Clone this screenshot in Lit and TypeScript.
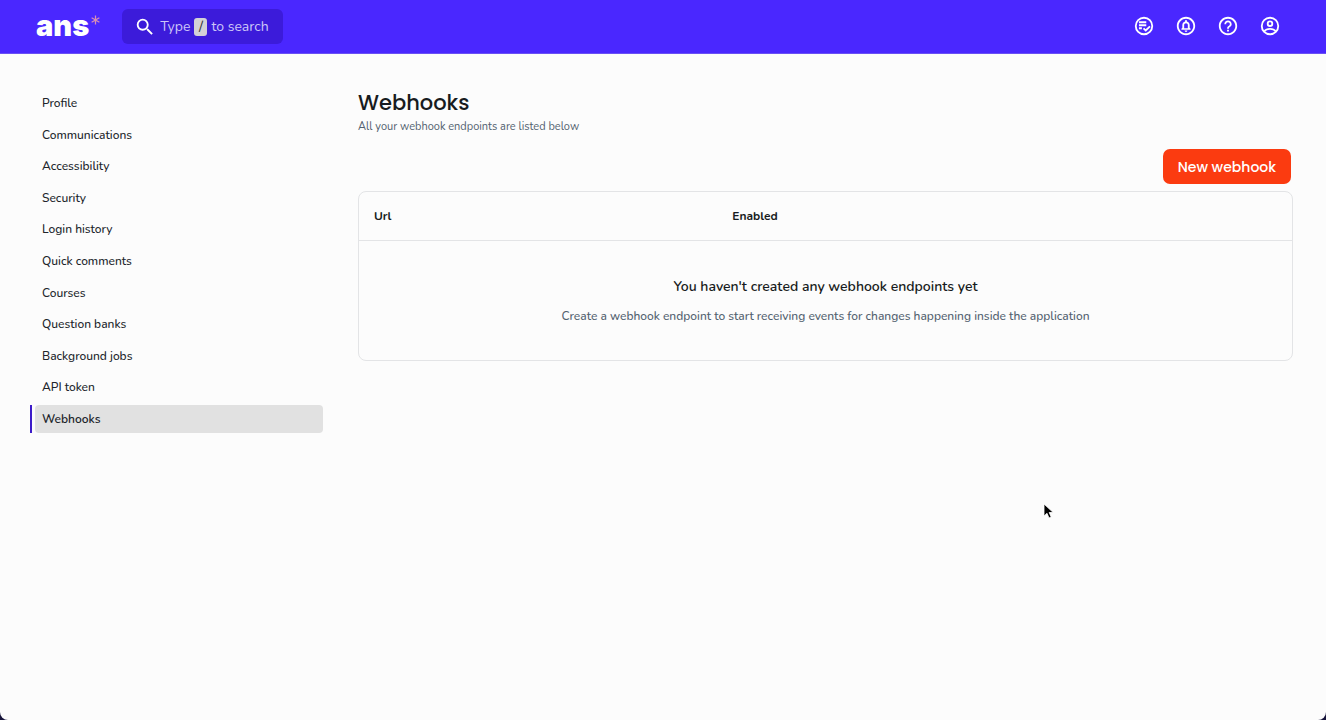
import { LitElement, html, css, svg } from "lit";
import { customElement, state } from "lit/decorators.js";

const icon = (content: unknown) => html`
  <svg class="icon" viewBox="0 0 24 24" fill="currentColor" aria-hidden="true">${content}</svg>
`;

const ring = svg`<circle cx="12" cy="12" r="9" fill="none" stroke="currentColor" stroke-width="2" />`;

const icons = {
  search: svg`<path d="M15.5 14h-.79l-.28-.27A6.47 6.47 0 0 0 16 9.5 6.5 6.5 0 1 0 9.5 16c1.61 0 3.09-.59 4.23-1.57l.27.28v.79l5 4.99L20.49 19l-4.99-5zm-6 0C7.01 14 5 11.99 5 9.5S7.01 5 9.5 5 14 7.01 14 9.5 11.99 14 9.5 14z" />`,
  grading: svg`${ring}<path d="M6.500 6.800h8v2.200h-8zM6.500 10h8v2.200h-8zM6.500 13.400h3.200v2.200H6.500z" />
    <path d="M11.500 14.500l2.400 2.400 4.600-4.600" fill="none" stroke="currentColor" stroke-width="2" />`,
  bell: svg`<path d="M12 2C6.48 2 2 6.48 2 12s4.48 10 10 10 10-4.48 10-10S17.52 2 12 2zm0 18c-4.41 0-8-3.59-8-8s3.59-8 8-8 8 3.59 8 8-3.59 8-8 8zm0-1.5c.83 0 1.5-.67 1.5-1.5h-3c0 .83.67 1.5 1.5 1.5zm4-4.5v-3c0-1.86-1.28-3.41-3-3.86V6.5c0-.55-.45-1-1-1s-1 .45-1 1v.64c-1.72.45-3 2-3 3.86v3l-1 1v1h10v-1l-1-1zm-2 .5h-4V11c0-1.1.9-2 2-2s2 .9 2 2v3.500z" />`,
  help: svg`<path d="M11 18h2v-2h-2v2zm1-16C6.48 2 2 6.480 2 12s4.480 10 10 10 10-4.480 10-10S17.520 2 12 2zm0 18c-4.410 0-8-3.590-8-8s3.590-8 8-8 8 3.590 8 8-3.590 8-8 8zm0-14c-2.210 0-4 1.790-4 4h2c0-1.100.900-2 2-2s2 .900 2 2c0 2-3 1.750-3 5h2c0-2.250 3-2.500 3-5 0-2.210-1.790-4-4-4z" />`,
  account: svg`${ring}<circle cx="12" cy="9.500" r="2.500" fill="none" stroke="currentColor" stroke-width="2" />
    <path d="M5.500 18c1.500-1.900 4-2.800 6.500-2.800s5 .9 6.500 2.800" fill="none" stroke="currentColor" stroke-width="2" />`,
};

@customElement("app-header")
class AppHeader extends LitElement {
  static styles = css`
    :host {
      display: flex;
      align-items: center;
      height: 53px;
      padding: 0 45px 0 36px;
      background: #4a27ff;
      border-bottom: 1px solid #6a50f4;
      font-family: Nunito, Lato, sans-serif;
    }
    .brand {
      display: flex;
      align-items: center;
      color: #fff;
      text-decoration: none;
    }
    .word {
      font: 900 29px/40px Inter, sans-serif;
      padding-bottom: 2px;
    }
    .star {
      width: 9px;
      height: 10px;
      margin: 0 0 14px 2px;
      stroke: #d98fb4;
      stroke-width: 1.4;
    }
    .search {
      display: flex;
      align-items: center;
      gap: 4px;
      height: 35px;
      margin-left: 22px;
      padding: 0 14px 0 12px;
      border: 0;
      border-radius: 6px;
      background: #3c1bda;
      color: #cdc6f8;
      font: 14px/20px Nunito, Lato, sans-serif;
      cursor: pointer;
    }
    .glass {
      display: flex;
      color: #fff;
    }
    .key {
      width: 13px;
      border-radius: 3px;
      background: #d3d1d6;
      color: #333;
      font: 14px/18px Nunito, Lato, sans-serif;
      text-align: center;
    }
    .icon {
      display: block;
      width: 22px;
      height: 22px;
    }
    .actions {
      display: flex;
      gap: 20px;
      margin-left: auto;
      padding-bottom: 2px;
    }
    .action {
      padding: 0;
      border: 0;
      background: none;
      color: #fff;
      cursor: pointer;
    }
  `;

  render() {
    return html`
      <a class="brand" href="#" aria-label="ans home">
        <span class="word">ans</span>
        <svg class="star" viewBox="0 0 10 10" aria-hidden="true">
          <path d="M5 0v10M.7 2.500l8.600 5M9.300 2.500l-8.600 5" />
        </svg>
      </a>
      <button class="search" type="button">
        <span class="glass">${icon(icons.search)}</span>
        <span>Type</span><kbd class="key">/</kbd><span>to search</span>
      </button>
      <div class="actions">
        <button class="action" type="button" aria-label="Grading">${icon(icons.grading)}</button>
        <button class="action" type="button" aria-label="Notifications">${icon(icons.bell)}</button>
        <button class="action" type="button" aria-label="Help">${icon(icons.help)}</button>
        <button class="action" type="button" aria-label="Account">${icon(icons.account)}</button>
      </div>
    `;
  }
}

@customElement("settings-nav")
class SettingsNav extends LitElement {
  @state() private items = [
    "Profile", "Communications", "Accessibility", "Security", "Login history",
    "Quick comments", "Courses", "Question banks", "Background jobs", "API token", "Webhooks",
  ];

  static styles = css`
    :host {
      display: block;
    }
    .list {
      display: flex;
      flex-direction: column;
      justify-content: space-between;
      min-height: 344px;
    }
    .link {
      display: block;
      padding-left: 3px;
      border-left: 2px solid transparent;
      color: #20242a;
      text-decoration: none;
      font: 500 12px/28px Nunito, Lato, sans-serif;
    }
    .label {
      display: block;
      padding: 0 7px;
      border-radius: 4px;
    }
    .current {
      border-color: #3d1cc9;
      font-weight: 600;
    }
    .current .label {
      background: #e1e1e1;
    }
  `;

  render() {
    return html`
      <nav class="list" aria-label="Settings">
        ${this.items.map((item) => {
          const current = item === "Webhooks";
          return html`<a class="link ${current ? "current" : ""}" href="#" aria-current=${current ? "page" : "false"}
            ><span class="label">${item}</span></a>`;
        })}
      </nav>
    `;
  }
}

@customElement("webhook-list")
class WebhookList extends LitElement {
  static styles = css`
    :host {
      display: block;
      color: #171b20;
      font-family: Nunito, Lato, sans-serif;
    }
    .title {
      margin: 0;
      font: 500 21px/28px Poppins, Inter, sans-serif;
    }
    .subtitle {
      margin: 2px 0 0;
      color: #52616f;
      font-size: 11px;
      line-height: 16px;
    }
    .toolbar {
      display: flex;
      justify-content: flex-end;
      padding: 14px 2px 7px 0;
    }
    .create {
      height: 35px;
      padding: 0 15px;
      border: 0;
      border-radius: 7px;
      background: #fb3b10;
      color: #fff;
      font: 500 14px/20px Poppins, Inter, sans-serif;
      cursor: pointer;
    }
    .table {
      width: 100%;
      table-layout: fixed;
      border: 1px solid #e3e4e6;
      border-radius: 8px;
      border-spacing: 0;
    }
    .url {
      width: 38.4%;
    }
    .head {
      box-sizing: border-box;
      padding: 14px 15px;
      border-bottom: 1px solid #e3e4e6;
      font-size: 12px;
      font-weight: 700;
      line-height: 20px;
      text-align: left;
    }
    .empty {
      padding: 36px 15px 34px;
      text-align: center;
    }
    .lead {
      margin: 0 0 9px;
      font-size: 14px;
      font-weight: 600;
      line-height: 20px;
    }
    .hint {
      margin: 0;
      color: #52616f;
      font-size: 12px;
      font-weight: 500;
      line-height: 20px;
    }
  `;

  render() {
    return html`
      <h1 class="title">Webhooks</h1>
      <p class="subtitle">All your webhook endpoints are listed below</p>
      <div class="toolbar">
        <button class="create" type="button">New webhook</button>
      </div>
      <table class="table">
        <thead>
          <tr>
            <th class="head url" scope="col">Url</th>
            <th class="head" scope="col">Enabled</th>
          </tr>
        </thead>
        <tbody>
          <tr>
            <td class="empty" colspan="2">
              <p class="lead">You haven't created any webhook endpoints yet</p>
              <p class="hint">Create a webhook endpoint to start receiving events for changes happening inside the application</p>
            </td>
          </tr>
        </tbody>
      </table>
    `;
  }
}

@customElement("app-root")
class AppRoot extends LitElement {
  static styles = css`
    :host {
      display: block;
      position: relative;
      background: #17143a;
    }
    .page {
      min-height: 100vh;
      border-radius: 0 0 8px 8px;
      background: #fcfcfc;
    }
    .body {
      display: grid;
      grid-template-columns: 293px minmax(0, 1fr);
      gap: 35px;
      padding: 35px 33px 35px 30px;
    }
    .pointer {
      position: absolute;
      top: 503px;
      left: 1043px;
      width: 11px;
      height: 17px;
    }
  `;

  render() {
    return html`
      <div class="page">
        <app-header></app-header>
        <main class="body">
          <settings-nav></settings-nav>
          <webhook-list></webhook-list>
        </main>
      </div>
      <svg class="pointer" viewBox="0 0 11 17" aria-hidden="true">
        <path d="M1 1v12l3-2.700 2 4.700 2.200-1-2-4.500h4z" fill="#000" stroke="#fff" stroke-width="0.800" />
      </svg>
    `;
  }
}
